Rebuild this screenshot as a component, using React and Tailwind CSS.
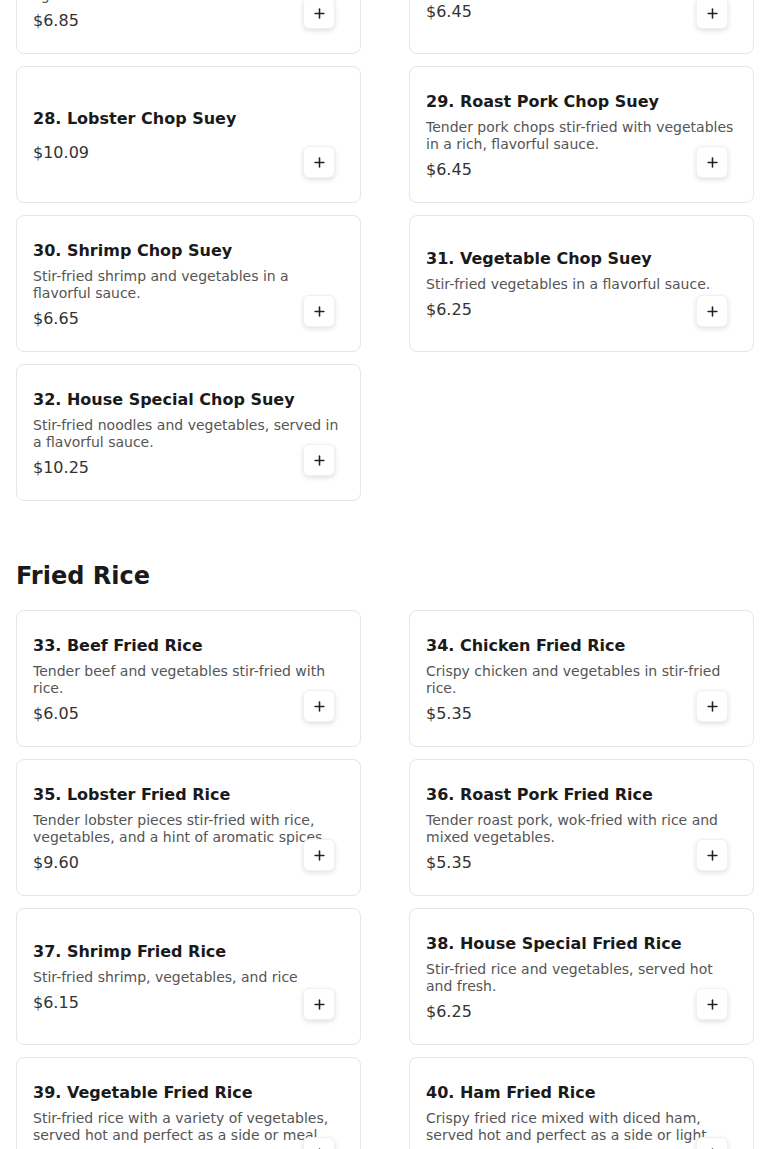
import React from "react";
import { Plus } from "lucide-react";

const chopSuey = [
  { n: "26. Chicken Chop Suey", d: "Tender chicken and vegetables stir-fried in a light sauce.", p: "$6.85" },
  { n: "27. Beef Chop Suey", d: "Beef and vegetables in a savory sauce.", p: "$6.45" },
  { n: "28. Lobster Chop Suey", d: "", p: "$10.09" },
  { n: "29. Roast Pork Chop Suey", d: "Tender pork chops stir-fried with vegetables in a rich, flavorful sauce.", p: "$6.45" },
  { n: "30. Shrimp Chop Suey", d: "Stir-fried shrimp and vegetables in a flavorful sauce.", p: "$6.65" },
  { n: "31. Vegetable Chop Suey", d: "Stir-fried vegetables in a flavorful sauce.", p: "$6.25" },
  { n: "32. House Special Chop Suey", d: "Stir-fried noodles and vegetables, served in a flavorful sauce.", p: "$10.25" },
];

const friedRice = [
  { n: "33. Beef Fried Rice", d: "Tender beef and vegetables stir-fried with rice.", p: "$6.05" },
  { n: "34. Chicken Fried Rice", d: "Crispy chicken and vegetables in stir-fried rice.", p: "$5.35" },
  { n: "35. Lobster Fried Rice", d: "Tender lobster pieces stir-fried with rice, vegetables, and a hint of aromatic spices.", p: "$9.60" },
  { n: "36. Roast Pork Fried Rice", d: "Tender roast pork, wok-fried with rice and mixed vegetables.", p: "$5.35" },
  { n: "37. Shrimp Fried Rice", d: "Stir-fried shrimp, vegetables, and rice", p: "$6.15" },
  { n: "38. House Special Fried Rice", d: "Stir-fried rice and vegetables, served hot and fresh.", p: "$6.25" },
  { n: "39. Vegetable Fried Rice", d: "Stir-fried rice with a variety of vegetables, served hot and perfect as a side or meal.", p: "$6.25" },
  { n: "40. Ham Fried Rice", d: "Crispy fried rice mixed with diced ham, served hot and perfect as a side or light meal.", p: "$5.85" },
];

function Card({ item }) {
  return (
    <div className="relative h-[137px] rounded-lg border border-[#e6e6e6] bg-white px-4 pt-[2px] flex flex-col justify-center">
      <div className="text-base leading-6 font-bold text-[#1a1a1a]">{item.n}</div>
      {item.d ? (
        <div className="mt-[5px] text-sm leading-[17px] text-[#555555] line-clamp-2">{item.d}</div>
      ) : null}
      <div className={(item.d ? "mt-[5px] " : "mt-[10px] ") + "text-base leading-6 text-[#333333]"}>{item.p}</div>
      <button className="absolute right-[25px] bottom-6 w-8 h-8 flex items-center justify-center rounded-md bg-white border border-[#f0f0f0] shadow-[0_2px_5px_rgba(0,0,0,0.12)] text-[#222]">
        <Plus size={15} strokeWidth={2.5} />
      </button>
    </div>
  );
}

export default function App() {
  return (
    <div className="h-[1149px] overflow-hidden bg-white" style={{ fontFamily: '"DejaVu Sans", sans-serif' }}>
      <div className="px-4 -mt-[83px]">
        <div className="grid grid-cols-2 gap-x-12 gap-y-3">
          {chopSuey.map((it) => (
            <Card key={it.n} item={it} />
          ))}
        </div>
        <h2 className="mt-[59px] mb-[18px] text-2xl leading-8 font-bold text-[#1a1a1a]">Fried Rice</h2>
        <div className="grid grid-cols-2 gap-x-12 gap-y-3">
          {friedRice.map((it) => (
            <Card key={it.n} item={it} />
          ))}
        </div>
      </div>
    </div>
  );
}
